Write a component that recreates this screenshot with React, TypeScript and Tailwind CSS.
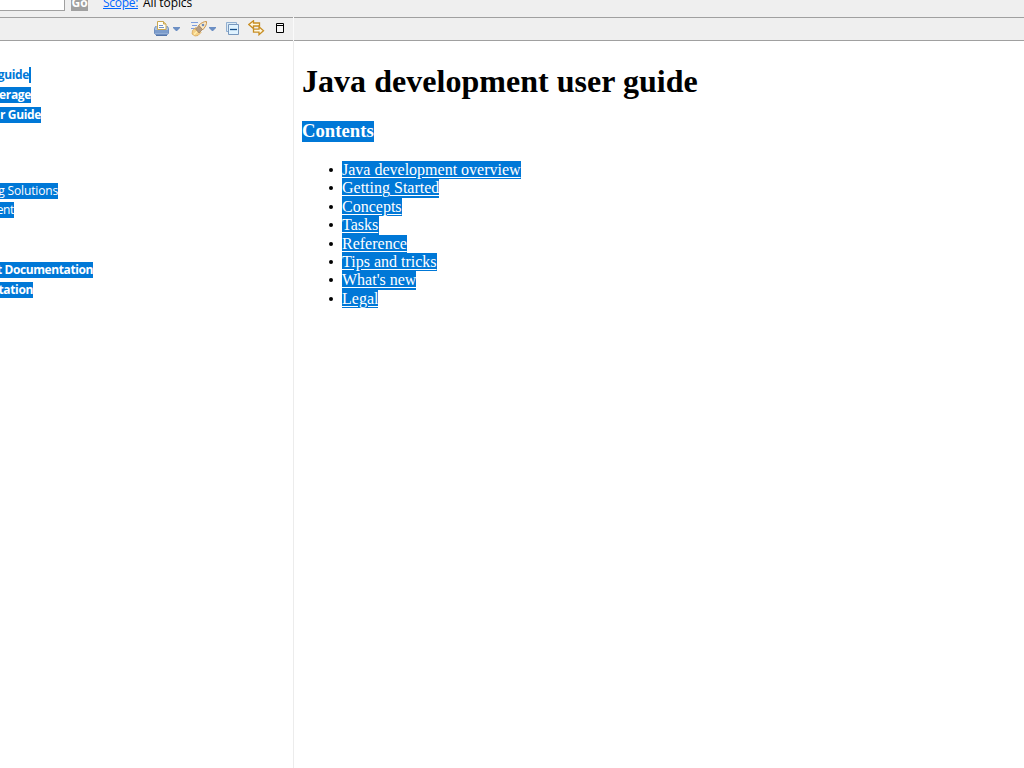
import React from 'react';

const nav = [
  { text: 'guide', cls: 'mt-[26px] w-[29px] h-4 text-[#0078d7] font-bold', sel: false },
  { text: 'erage', cls: 'mt-[4px] w-[31px] h-4 bg-[#0078d7] text-white font-bold', sel: true },
  { text: 'r Guide', cls: 'mt-[4px] w-[41px] h-4 bg-[#0078d7] text-white font-bold', sel: true },
  { text: 'g Solutions', cls: 'mt-[60px] w-[58px] h-4 bg-[#0078d7] text-white tracking-[-0.15px]', sel: true },
  { text: 'ent', cls: 'mt-[3px] w-[14px] h-4 bg-[#0078d7] text-white', sel: true },
  { text: 't Documentation', cls: 'mt-[44px] w-[93px] h-4 bg-[#0078d7] text-white font-bold tracking-[-0.4px]', sel: true },
  { text: 'tation', cls: 'mt-[4px] w-[33px] h-4 bg-[#0078d7] text-white font-bold', sel: true },
];

const topics = [
  { text: 'Java development overview', w: 'w-[179px]' },
  { text: 'Getting Started', w: 'w-[97px]' },
  { text: 'Concepts', w: 'w-[60px]' },
  { text: 'Tasks', w: 'w-[37px]' },
  { text: 'Reference', w: 'w-[65px]' },
  { text: 'Tips and tricks', w: 'w-[95px]' },
  { text: "What's new", w: 'w-[74px]' },
  { text: 'Legal', w: 'w-[36px]' },
];

function Arrow() {
  return (
    <svg width="7" height="4" viewBox="0 0 7 4" className="mt-[9px] shrink-0">
      <path d="M0 0h7v1L4 4H3L0 1z" fill="#6c8fc4" />
    </svg>
  );
}

function Toolbar() {
  return (
    <div className="flex h-6 w-[293px] shrink-0 items-start border-y border-[#a0a0a0] bg-[#efefef] pl-[154px]">
      <svg width="16" height="16" viewBox="0 0 16 16" className="mt-[3px] shrink-0">
        <path d="M2.5 5.5h-1l-1 2v5l1 1h12l1-1v-5l-1-2h-1" fill="#a9c0e0" stroke="#6f8fc0" />
        <path d="M1 9h13v3.5H1z" fill="#7c9ccb" />
        <path d="M2 14.5h11" stroke="#5374a8" />
        <path d="M3.5.5h6l2.5 2.500v5.500h-8.500z" fill="#fffef6" stroke="#c8a653" />
        <path d="M9.5.5v2.500h2.500" fill="#ecd394" stroke="#c8a653" />
        <path d="M5 4.500h4M5 6.500h5" stroke="#7393c8" />
      </svg>
      <span className="ml-[3px] flex"><Arrow /></span>
      <svg width="17" height="16" viewBox="0 0 17 16" className="ml-[11px] mt-[3px] shrink-0">
        <path d="M0 1.500h7M1 4.500h5M0 7.500h4" stroke="#7d9ddd" />
        <path d="M5 6.500l-3.500 3-.5 3.500 3 2 3-.5 3-3z" fill="#f5cf86" stroke="#d4a04b" strokeWidth=".7" />
        <path d="M15.500.500c-3 0-5.500 1.500-8 4l4 4.500c2.500-2.500 4.500-5.500 4-8.500z" fill="#fce9c5" stroke="#c9954f" />
        <path d="M8 4.500L4.500 8l3.500 4 3.500-3.500z" fill="#b39b83" stroke="#a17e55" strokeWidth=".7" />
        <path d="M3 13.500l3-3" stroke="#fff0ae" strokeWidth="1.500" />
        <circle cx="12" cy="4" r="1.300" fill="#6e8bb9" />
      </svg>
      <span className="ml-px flex"><Arrow /></span>
      <svg width="14" height="14" viewBox="0 0 14 14" className="ml-[10px] mt-[4px] shrink-0">
        <path d="M.5.5h10v9H.5z" fill="#dcebf6" stroke="#91afd0" />
        <path d="M2.500 2.500h10v10h-10z" fill="#e0f3ff" stroke="#7897bd" />
        <path d="M4 7.500h7" stroke="#164f8b" strokeWidth="1.300" />
      </svg>
      <svg width="17" height="16" viewBox="0 0 17 16" className="ml-[8px] mt-[2px] shrink-0">
        <path d="M5.500.700L.8 4.500l4.700 4V6h6V3h-6z" fill="#fff8e2" stroke="#c88e24" strokeWidth="1.300" />
        <path d="M11 6.700l4.500 4-4.500 4v-2.500H5.500v-3H11z" fill="#fff8e2" stroke="#c88e24" strokeWidth="1.300" />
      </svg>
      <svg width="8" height="10" viewBox="0 0 8 10" className="ml-[11px] mt-[5px] shrink-0">
        <path d="M.5.5h7v9h-7zM1 2.500h6" fill="#f7f7f7" stroke="black" />
      </svg>
    </div>
  );
}

export default function App() {
  return (
    <div className="flex h-[768px] w-[1024px] flex-col overflow-hidden bg-white font-['Open_Sans',sans-serif] text-[12px] text-black">
      <header className="flex h-[17px] shrink-0 items-start bg-[#efefef]">
        <div className="h-[11px] w-[65px] border-r border-b border-[#a0a0a0] bg-white" />
        <div className="ml-[6px] flex h-[11px] w-[17px] items-end justify-center overflow-hidden bg-[#a0a0a0] font-bold leading-[16px] text-white">Go</div>
        <div className="-mt-[5px] ml-[15px] w-[35px] whitespace-nowrap leading-[16px] tracking-[-0.3px] text-[#0066ff] underline">Scope:</div>
        <div className="-mt-[5px] ml-[5px] whitespace-nowrap leading-[16px] tracking-[-0.1px]">All topics</div>
      </header>
      <div className="flex h-6 shrink-0">
        <Toolbar />
        <div className="w-px bg-[#fafafa]" />
        <div className="flex-1 border-y border-[#a0a0a0] bg-[#efefef]" />
      </div>
      <main className="flex min-h-0 flex-1">
        <nav className="flex w-[294px] shrink-0 flex-col items-start border-r border-[#ececec] tracking-[-0.35px]">
          {nav.map((n) => (
            <div key={n.text} className={`flex shrink-0 justify-end whitespace-nowrap leading-[16px] ${n.cls}`}>
              <span>{n.text}</span>
              {!n.sel && <span className="-mr-[2px] h-4 w-[2px] shrink-0 bg-[#0078d7]" />}
            </div>
          ))}
        </nav>
        <article className="flex flex-1 flex-col items-start pl-[8px] font-['Liberation_Serif',serif]">
          <h1 className="mt-[22px] h-[37px] whitespace-nowrap text-[32px] font-bold leading-[37px] tracking-[0.03px]">Java development user guide</h1>
          <h2 className="mt-[21px] h-[21px] w-[72px] whitespace-nowrap bg-[#0078d7] text-[18.72px] font-bold leading-[19px] text-white">Contents</h2>
          <ul className="mt-[19px] pl-[40px]">
            {topics.map((t) => (
              <li key={t.text} className="relative h-[18.4px]">
                <span className="absolute top-[7px] -left-[13px] size-[4px] rounded-full bg-black" />
                <a className={`block h-[18.4px] whitespace-nowrap bg-[#0078d7] text-[16px] leading-[18.4px] text-white underline underline-offset-2 ${t.w}`}>{t.text}</a>
              </li>
            ))}
          </ul>
        </article>
      </main>
    </div>
  );
}
